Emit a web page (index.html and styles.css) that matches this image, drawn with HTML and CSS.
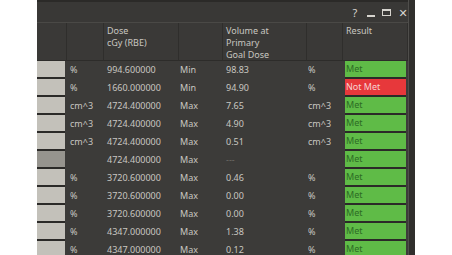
FILE: index.html
```html
<!DOCTYPE html>
<html lang="en">
<head>
    <meta charset="UTF-8">
    <meta name="viewport" content="width=device-width, initial-scale=1.0">
    <title>Goals</title>
    <link rel="stylesheet" href="styles.css">
</head>
<body>
    <div class="window">
        <div class="titlebar">
            <span class="tb-btn">?</span>
            <span class="tb-btn tb-min"></span>
            <span class="tb-btn tb-max"></span>
            <span class="tb-btn">&#x2715;</span>
        </div>
        <div class="grid">
            <!-- header -->
            <div class="hd"></div>
            <div class="hd"></div>
            <div class="hd">Dose<br>cGy (RBE)</div>
            <div class="hd"></div>
            <div class="hd">Volume at<br>Primary<br>Goal Dose</div>
            <div class="hd"></div>
            <div class="hd">Result</div>

            <!-- rows -->
            <div class="c sw"><span></span></div><div class="c">%</div><div class="c">994.600000</div><div class="c mm">Min</div><div class="c">98.83</div><div class="c u2">%</div><div class="c res"><span class="met">Met</span></div>
            <div class="c sw"><span></span></div><div class="c">%</div><div class="c">1660.000000</div><div class="c mm">Min</div><div class="c">94.90</div><div class="c u2">%</div><div class="c res"><span class="notmet">Not Met</span></div>
            <div class="c sw"><span></span></div><div class="c">cm^3</div><div class="c">4724.400000</div><div class="c mm">Max</div><div class="c">7.65</div><div class="c u2">cm^3</div><div class="c res"><span class="met">Met</span></div>
            <div class="c sw"><span></span></div><div class="c">cm^3</div><div class="c">4724.400000</div><div class="c mm">Max</div><div class="c">4.90</div><div class="c u2">cm^3</div><div class="c res"><span class="met">Met</span></div>
            <div class="c sw"><span></span></div><div class="c">cm^3</div><div class="c">4724.400000</div><div class="c mm">Max</div><div class="c">0.51</div><div class="c u2">cm^3</div><div class="c res"><span class="met">Met</span></div>
            <div class="c sw"><span class="dim"></span></div><div class="c"></div><div class="c">4724.400000</div><div class="c mm">Max</div><div class="c dash">---</div><div class="c u2"></div><div class="c res"><span class="met">Met</span></div>
            <div class="c sw"><span></span></div><div class="c">%</div><div class="c">3720.600000</div><div class="c mm">Max</div><div class="c">0.46</div><div class="c u2">%</div><div class="c res"><span class="met">Met</span></div>
            <div class="c sw"><span></span></div><div class="c">%</div><div class="c">3720.600000</div><div class="c mm">Max</div><div class="c">0.00</div><div class="c u2">%</div><div class="c res"><span class="met">Met</span></div>
            <div class="c sw"><span></span></div><div class="c">%</div><div class="c">3720.600000</div><div class="c mm">Max</div><div class="c">0.00</div><div class="c u2">%</div><div class="c res"><span class="met">Met</span></div>
            <div class="c sw"><span></span></div><div class="c">%</div><div class="c">4347.000000</div><div class="c mm">Max</div><div class="c">1.38</div><div class="c u2">%</div><div class="c res"><span class="met">Met</span></div>
            <div class="c sw"><span></span></div><div class="c">%</div><div class="c">4347.000000</div><div class="c mm">Max</div><div class="c">0.12</div><div class="c u2">%</div><div class="c res"><span class="met">Met</span></div>
        </div>
    </div>
</body>
</html>
```

FILE: styles.css
```css
body {
    margin: 0;
    background-color: #fff;
    font-family: 'Noto Sans', 'DejaVu Sans', sans-serif;
    font-size: 9px;
    color: #c9c7c1;
    overflow: hidden;
}
.window {
    margin-left: 37px;
    width: 371px;
    height: 255px;
    background-color: #3c3b39;
    border-right: 1px solid #4f4e4b;
    box-shadow: 6px 0 0 #302f2d;
    overflow: hidden;
}
.titlebar {
    height: 20px;
    border-top: 2px solid #2b2a28;
    border-bottom: 1px solid #4a4946;
    background-color: #393836;
    display: flex;
    justify-content: flex-end;
    align-items: center;
    gap: 7px;
    font-size: 11px;
    color: #d6d4ce;
}
.tb-btn {
    width: 10px;
    text-align: center;
}
.tb-min {
    width: 8px;
    height: 2px;
    margin-top: 8px;
    background-color: #d6d4ce;
}
.tb-max {
    height: 7px;
    width: 9px;
    box-sizing: border-box;
    border: 1px solid #d6d4ce;
    border-top-width: 2px;
}
.grid {
    display: grid;
    grid-template-columns: 30px 37px 75px 44px 84px 36px 65px;
    grid-auto-rows: 18px;
    grid-template-rows: 38px;
}
.hd {
    background-color: #3a3937;
    border-right: 1px solid #2f2e2c;
    border-bottom: 1px solid #2d2c2a;
    padding: 2px 0 0 3px;
    line-height: 12px;
}
.c {
    padding-left: 3px;
    line-height: 18px;
    white-space: nowrap;
}
.mm,
.u2 {
    padding-left: 1px;
}
.dash {
    color: #6f6d68;
}
.sw {
    padding: 0;
}
.sw span,
.res span {
    display: block;
    height: 16px;
    border-bottom: 2px solid #2b2a28;
}
.sw span {
    width: 28px;
    background-color: #c3c1ba;
}
.sw span.dim {
    background-color: #96948e;
}
.res {
    padding-left: 2px;
}
.res span {
    width: 60px;
    padding-left: 1px;
    line-height: 16px;
}
.met {
    background-color: #5fbb47;
    color: #2d6b25;
}
.notmet {
    background-color: #e7383b;
    color: #f6d2d2;
}
```
